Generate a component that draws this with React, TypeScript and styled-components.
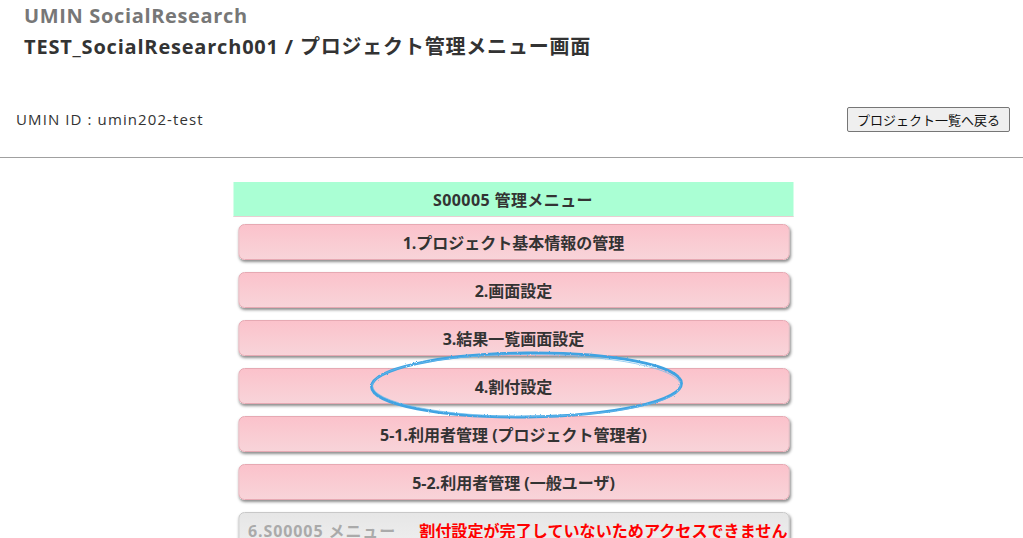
import React from "react";
import styled, { createGlobalStyle } from "styled-components";

const GlobalStyle = createGlobalStyle`
  html, body {
    margin: 0;
    padding: 0;
    background: #ffffff;
    font-family: "Open Sans", "Noto Sans CJK JP", sans-serif;
    color: #333333;
  }
`;

const Page = styled.div({
  width: "100%",
  minHeight: 538,
  overflow: "hidden",
});

const Header = styled.header({
  padding: "2px 24px 0",
});

const SiteName = styled.h1({
  margin: 0,
  fontSize: 20,
  lineHeight: "27px",
  fontWeight: 700,
  letterSpacing: 0.65,
  color: "#777777",
});

const PageTitle = styled.h2({
  margin: "4px 0 0",
  fontSize: 20,
  lineHeight: "27px",
  fontWeight: 700,
  letterSpacing: 0.8,
  color: "#333333",
});

const UserBar = styled.div({
  display: "flex",
  justifyContent: "space-between",
  alignItems: "center",
  padding: "0 13px 0 16px",
  marginTop: 46,
  height: 26,
});

const UserId = styled.span({
  fontSize: 15,
  letterSpacing: 1.1,
  color: "#333333",
});

const BackButton = styled.button({
  fontFamily: "inherit",
  fontSize: 13,
  height: 25,
  padding: "0 9px",
  color: "#111",
  background: "#efefef",
  border: "1px solid #767676",
  borderRadius: 2,
});

const Divider = styled.hr({
  margin: "25px 0 0",
  border: 0,
  borderTop: "1px solid #a0a0a0",
  height: 0,
});

const Menu = styled.section({
  width: 560,
  margin: "24px auto 0",
  transform: "translateX(1.5px)",
  position: "relative",
});

const MenuHeader = styled.div({
  height: 34,
  display: "flex",
  alignItems: "center",
  justifyContent: "center",
  background: "#aaffd4",
  borderBottom: "1px solid #e8cfd2",
  fontSize: 16,
  fontWeight: 700,
  letterSpacing: 0.4,
  color: "#333333",
});

const MenuList = styled.div({
  display: "flex",
  flexDirection: "column",
  gap: 12,
  padding: "7px 4px 0 5px",
});

const MenuButton = styled.div<{ $disabled?: boolean }>`
  height: 34px;
  display: flex;
  align-items: center;
  justify-content: ${({ $disabled }) => ($disabled ? "flex-start" : "center")};
  padding: ${({ $disabled }) => ($disabled ? "0 0 0 9px" : "0")};
  border: 1px solid ${({ $disabled }) => ($disabled ? "#c8c8c8" : "#e6a9b3")};
  border-radius: 6px;
  background: ${({ $disabled }) =>
    $disabled
      ? "linear-gradient(#e6e6e6, #efefef)"
      : "linear-gradient(#fbc2cb, #f8d4d9)"};
  box-shadow: 1px 2px 3px rgba(0, 0, 0, 0.45);
  font-size: 16px;
  font-weight: 700;
  color: ${({ $disabled }) => ($disabled ? "#aaaaaa" : "#333333")};
  white-space: nowrap;
`;

const DisabledLabel = styled.span({
  letterSpacing: 0.9,
});

const Warning = styled.span({
  marginLeft: 23,
  fontSize: 16.1,
  color: "#ff0000",
  fontWeight: 700,
});

const Circle = styled.svg({
  position: "absolute",
  left: 135,
  top: 168,
  pointerEvents: "none",
  overflow: "visible",
});

const items = [
  "1.プロジェクト基本情報の管理",
  "2.画面設定",
  "3.結果一覧画面設定",
  "4.割付設定",
  "5-1.利用者管理 (プロジェクト管理者)",
  "5-2.利用者管理 (一般ユーザ)",
];

export default function App() {
  return (
    <Page>
      <GlobalStyle />
      <Header>
        <SiteName>UMIN SocialResearch</SiteName>
        <PageTitle>TEST_SocialResearch001 / プロジェクト管理メニュー画面</PageTitle>
      </Header>
      <UserBar>
        <UserId>UMIN ID : umin202-test</UserId>
        <BackButton>プロジェクト一覧へ戻る</BackButton>
      </UserBar>
      <Divider />
      <Menu>
        <MenuHeader>S00005 管理メニュー</MenuHeader>
        <MenuList>
          {items.map((label) => (
            <MenuButton key={label}>{label}</MenuButton>
          ))}
          <MenuButton $disabled>
            <DisabledLabel>6.S00005 メニュー</DisabledLabel>
            <Warning>割付設定が完了していないためアクセスできません</Warning>
          </MenuButton>
        </MenuList>
        <Circle width="316" height="70" viewBox="0 0 316 70">
          <defs>
            <filter id="crayon" x="-5%" y="-20%" width="110%" height="140%">
              <feTurbulence type="fractalNoise" baseFrequency="0.9" numOctaves="2" seed="3" />
              <feDisplacementMap in="SourceGraphic" scale="2.2" />
            </filter>
          </defs>
          <g filter="url(#crayon)">
            <ellipse
              cx="158"
              cy="35"
              rx="155"
              ry="32"
              fill="none"
              stroke="#3fa3e2"
              strokeWidth="2.8"
              transform="rotate(-0.6 158 35)"
            />
            <ellipse
              cx="158"
              cy="35.5"
              rx="154"
              ry="31"
              fill="none"
              stroke="#6bbbec"
              strokeWidth="1"
              opacity="0.7"
            />
          </g>
        </Circle>
      </Menu>
    </Page>
  );
}
